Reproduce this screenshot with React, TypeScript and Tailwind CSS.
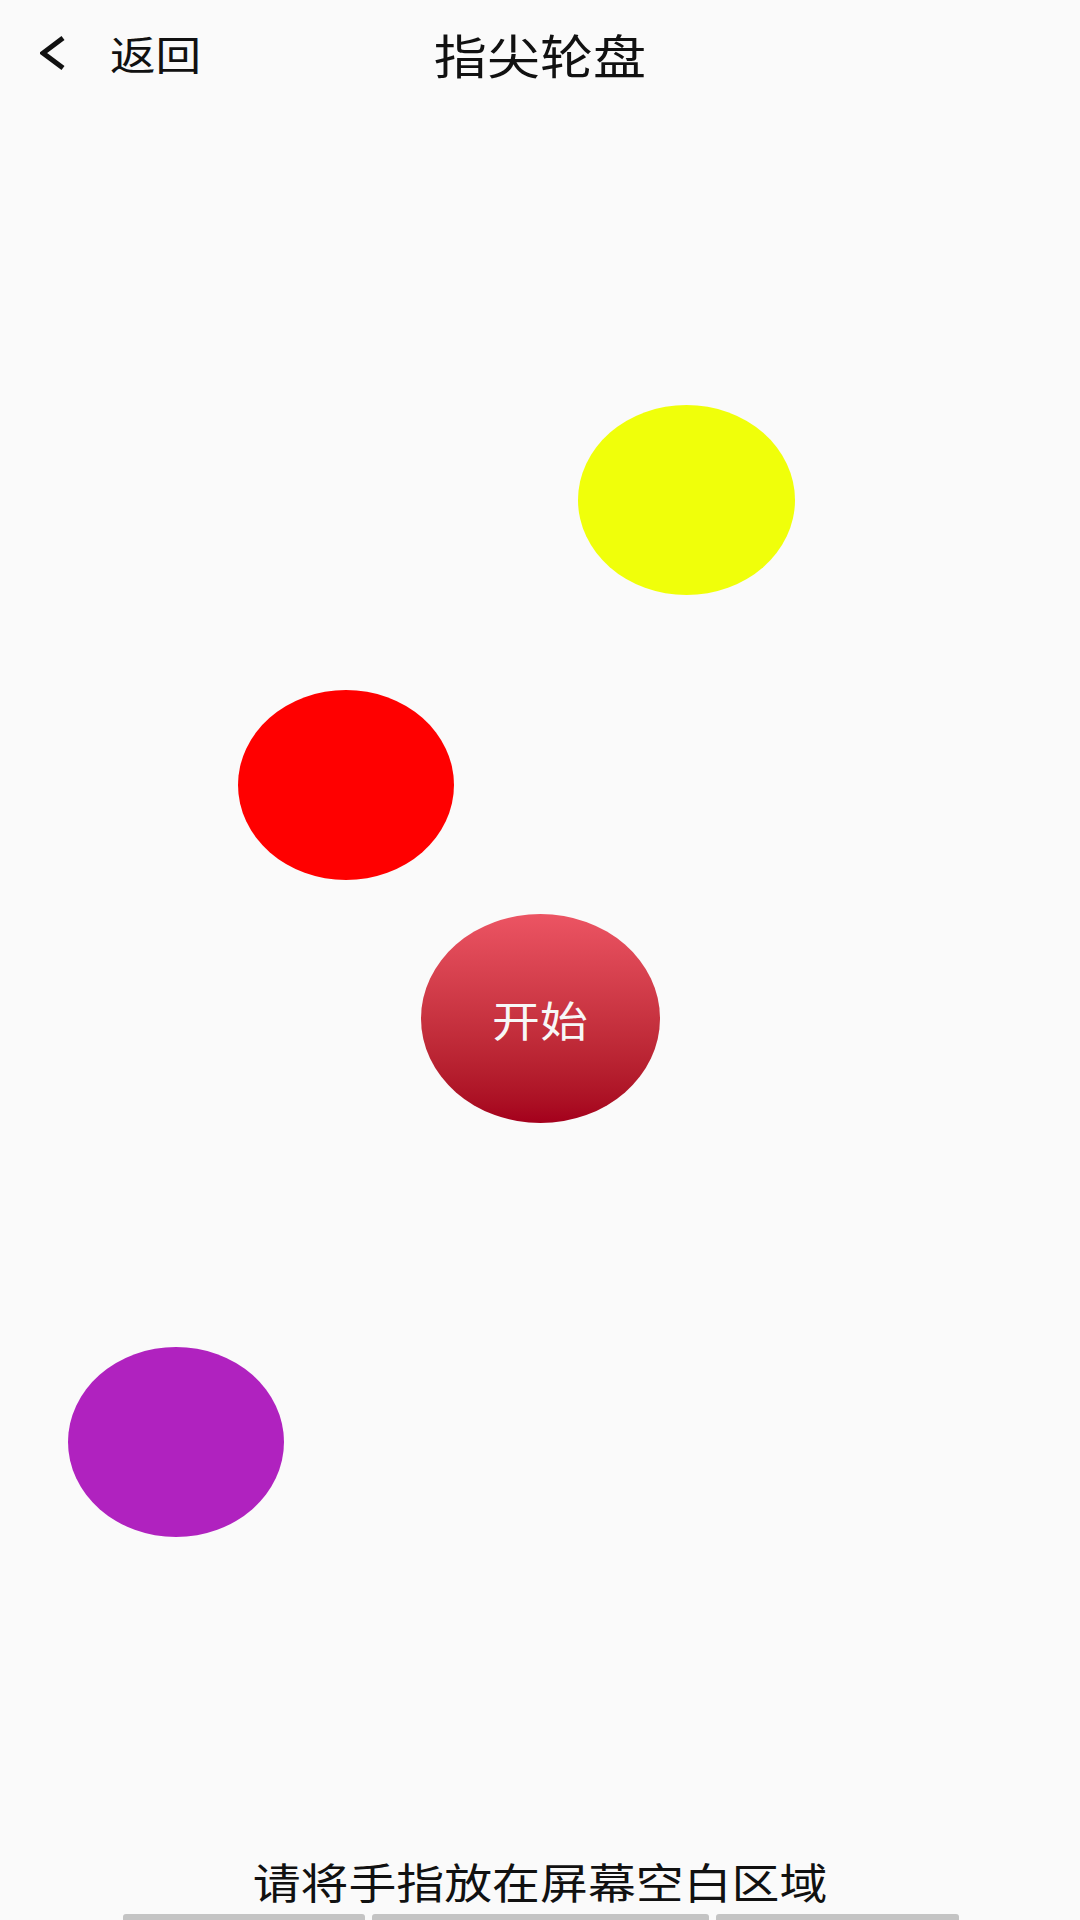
import React from "react";

const font = { fontFamily: '"Noto Sans CJK SC", "Noto Sans", sans-serif' };

export default function App() {
  return (
    <div
      className="relative w-[1080px] h-[1920px] bg-[#fafafa] text-[#111] flex flex-col overflow-hidden"
      style={font}
    >
      {/* Header */}
      <div className="h-[106px] grid grid-cols-[1fr_auto_1fr] items-center">
        <div className="flex items-center pl-[40px]">
          <svg width="26" height="34" viewBox="0 0 26 34" className="shrink-0">
            <polyline
              points="23,2 3,17 23,32"
              fill="none"
              stroke="#111"
              strokeWidth="5"
              strokeLinecap="butt"
              strokeLinejoin="miter"
            />
          </svg>
          <span className="ml-[44px] inline-block text-[40px] leading-none scale-x-[1.14] origin-left">
            返回
          </span>
        </div>
        <div className="text-[47px] leading-none scale-x-[1.13] origin-center">指尖轮盘</div>
        <div />
      </div>

      {/* Canvas */}
      <div className="flex-1" />

      {/* Free-canvas dots */}
      <div className="absolute left-[578px] top-[405px] w-[217px] h-[190px] rounded-[50%] bg-[#f0ff0a]" />
      <div className="absolute left-[238px] top-[690px] w-[216px] h-[190px] rounded-[50%] bg-[#ff0000]" />
      <div className="absolute left-[68px] top-[1347px] w-[216px] h-[190px] rounded-[50%] bg-[#b022bf]" />
      <div className="absolute left-[421px] top-[914px] w-[239px] h-[209px] rounded-[50%] bg-gradient-to-b from-[#ec5463] to-[#a4001c] flex items-center justify-center">
        <span className="inline-block text-[42px] leading-none text-[#f7f7f7] scale-x-[1.14]">开始</span>
      </div>

      {/* Footer */}
      <div className="flex flex-col">
        <div className="h-[48px] flex items-center justify-center">
          <span className="inline-block text-[42px] leading-none scale-x-[1.14]">请将手指放在屏幕空白区域</span>
        </div>
        <div className="mt-[9px] h-[6px] flex gap-[7px] pl-[123px]">
          <div className="w-[242px] h-full bg-[#c4c4c4] rounded-t-[3px]" />
          <div className="w-[337px] h-full bg-[#c4c4c4] rounded-t-[3px]" />
          <div className="w-[243px] h-full bg-[#c4c4c4] rounded-t-[3px]" />
        </div>
      </div>
    </div>
  );
}
